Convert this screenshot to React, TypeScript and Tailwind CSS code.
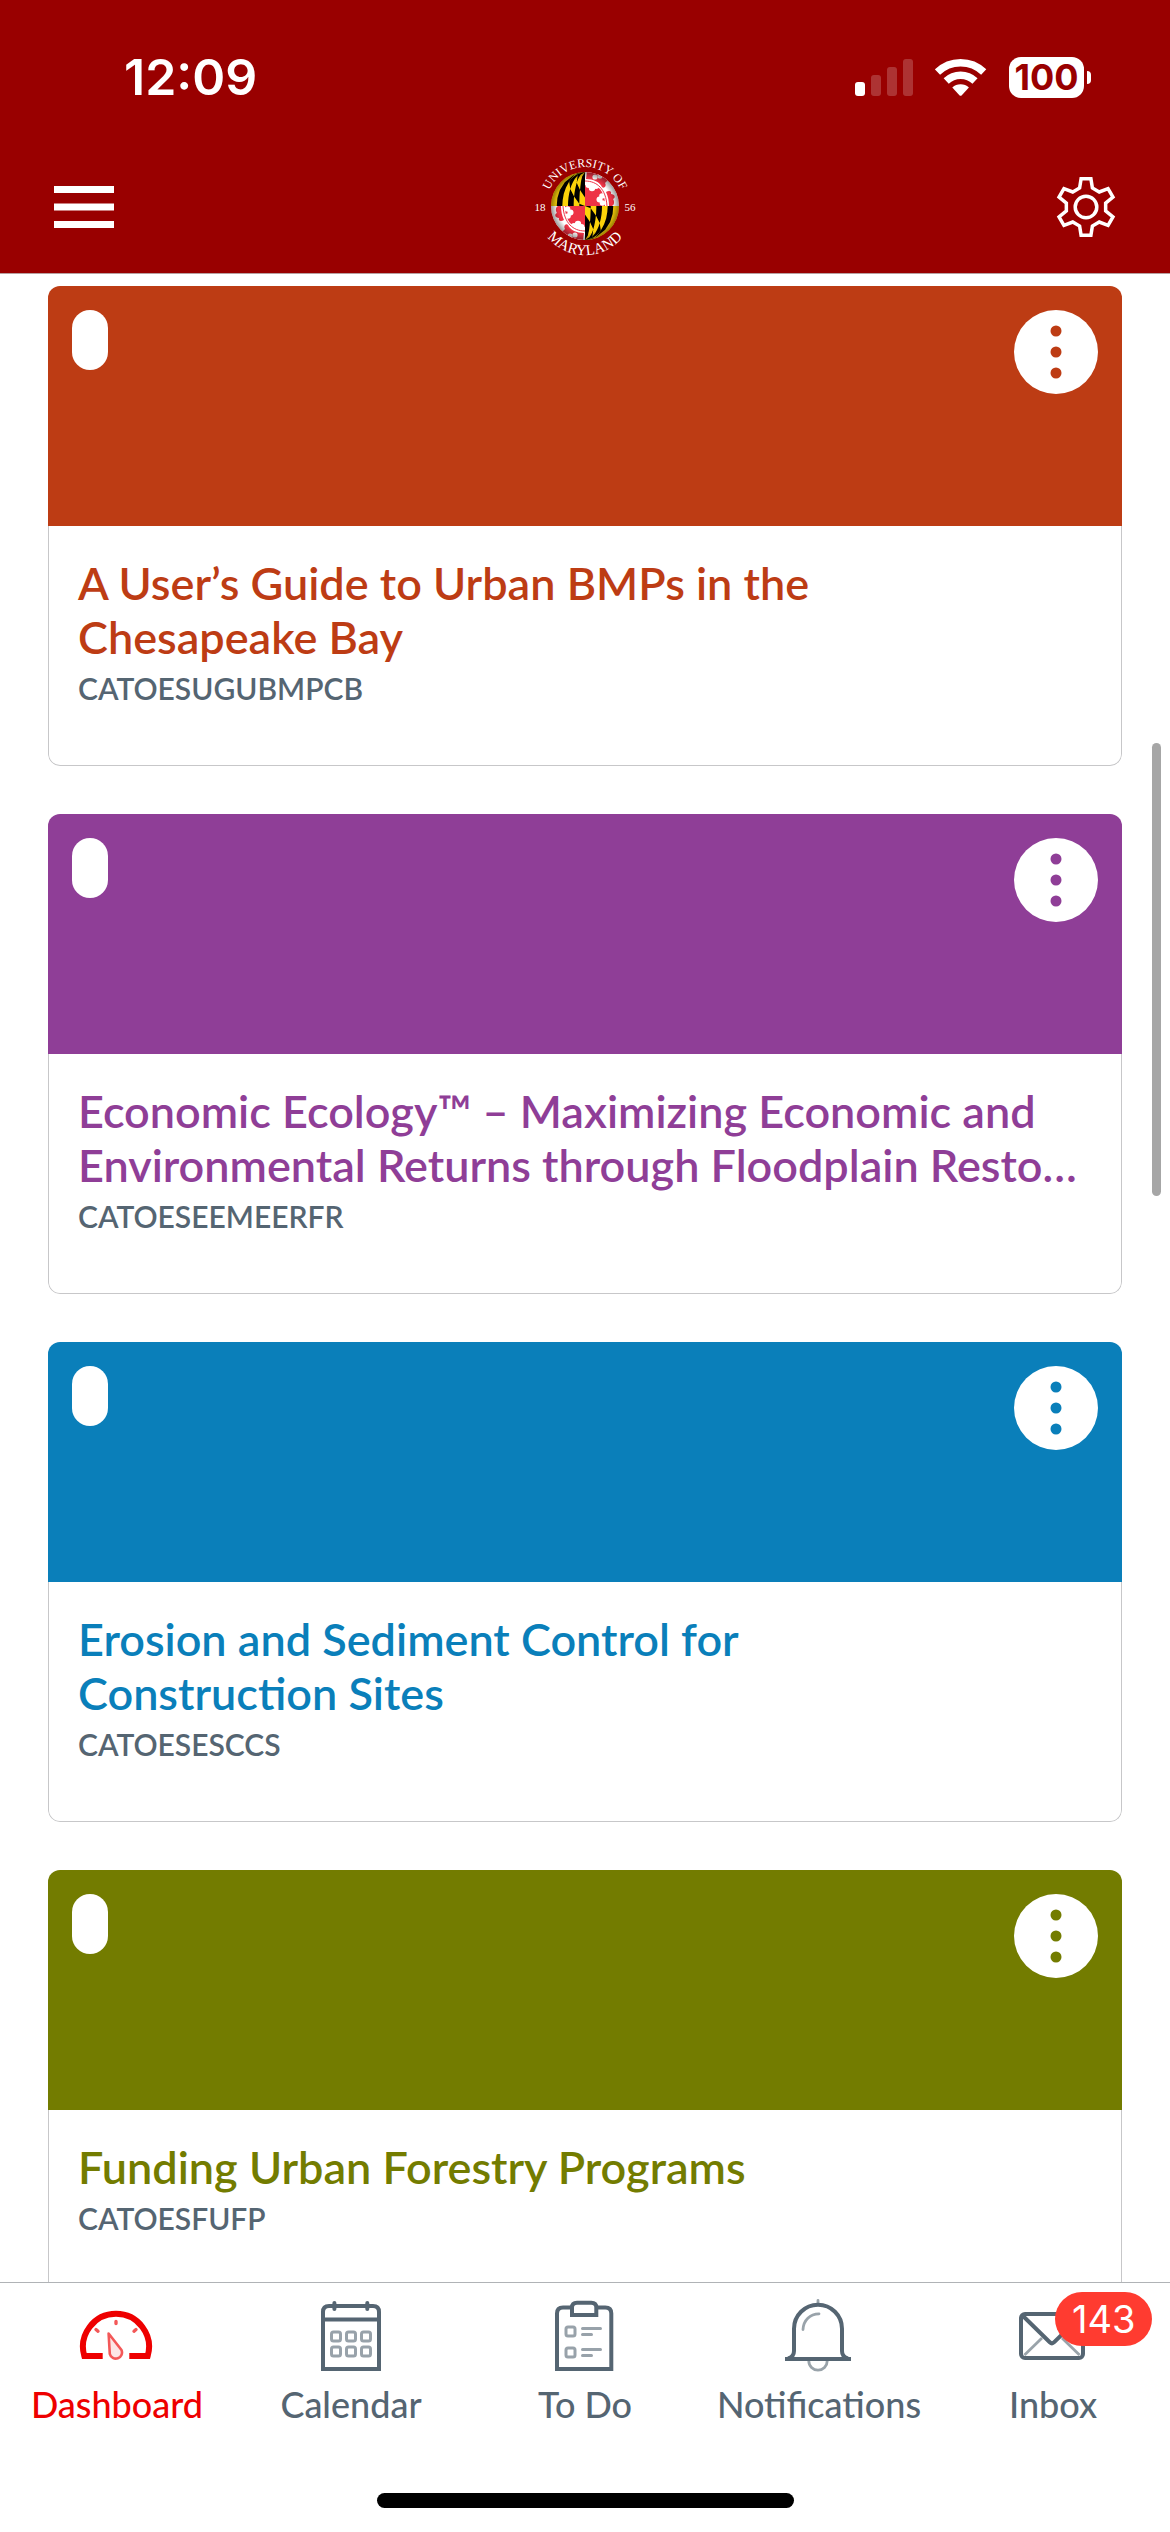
import React, { useState } from 'react';

type Course = {
  title: string;
  code: string;
  bg: string;
  text: string;
};

const courses: Course[] = [
  {
    title: 'A User’s Guide to Urban BMPs in the\nChesapeake Bay',
    code: 'CATOESUGUBMPCB',
    bg: 'bg-[#bd3c14]',
    text: 'text-[#bd3c14]',
  },
  {
    title: 'Economic Ecology™ – Maximizing Economic and\nEnvironmental Returns through Floodplain Resto…',
    code: 'CATOESEEMEERFR',
    bg: 'bg-[#8f3e97]',
    text: 'text-[#8f3e97]',
  },
  {
    title: 'Erosion and Sediment Control for\nConstruction Sites',
    code: 'CATOESESCCS',
    bg: 'bg-[#0a7fba]',
    text: 'text-[#0a7fba]',
  },
  {
    title: 'Funding Urban Forestry Programs',
    code: 'CATOESFUFP',
    bg: 'bg-[#737c00]',
    text: 'text-[#737c00]',
  },
];

// Point on the globe from flat quadrant coordinates (u to the left, v up)
const globePoint = (u: number, v: number) => {
  const y = -34 * v;
  const x = -34 * u * Math.sqrt(Math.max(0, 1 - v * v));
  return `${x.toFixed(1)},${y.toFixed(1)}`;
};

// Black parts of the black and gold quarter: six pales with a counterchanged bend
const blackPales = [0, 1, 2, 3, 4, 5].flatMap((i) => {
  const a = i / 6;
  const b = (i + 1) / 6;
  const low = (u: number) => Math.max(0, Math.min(1, u * 1.3 - 0.15));
  const high = (u: number) => Math.min(1, 0.25 + u * 1.3);
  const shape = (from: (u: number) => number, to: (u: number) => number) => {
    const left = [0, 0.25, 0.5, 0.75, 1].map((t) => globePoint(b, from(b) + (to(b) - from(b)) * t));
    const right = [1, 0.75, 0.5, 0.25, 0].map((t) => globePoint(a, from(a) + (to(a) - from(a)) * t));
    return [...left, ...right].join(' ');
  };
  return i % 2 === 1 ? [shape(low, high)] : [shape(() => 0, low), shape(high, () => 1)];
});

const gearPoints = [0, 1, 2, 3, 4, 5]
  .flatMap((i) => {
    const c = Math.cos((i * Math.PI) / 3);
    const s = Math.sin((i * Math.PI) / 3);
    return [[-6.4, -19], [-4.9, -28.3], [4.9, -28.3], [6.4, -19]].map(
      ([x, y]) => `${(30 + x * c - y * s).toFixed(2)},${(30 + x * s + y * c).toFixed(2)}`
    );
  })
  .join(' ');

const GearIcon = () => (
  <svg viewBox="0 0 60 60" className="size-[60px]" fill="none" stroke="currentColor" strokeWidth="3.5" aria-hidden="true">
    <polygon points={gearPoints} />
    <circle cx="30" cy="30" r="10.8" />
  </svg>
);

const MenuIcon = () => (
  <svg viewBox="0 0 60 60" className="size-[60px]" fill="currentColor" aria-hidden="true">
    <path d="M0 9h60v7H0zM0 26.5h60v7H0zM0 44h60v7H0z" />
  </svg>
);

const RedQuarter = () => (
  <g>
    <path d="M0 0H34V-34H0z" fill="#fff" />
    <path d="M0 0V-21C6-21 12-20 15-17C19-12 20-6 20 0z" fill="#ee3346" />
    <path d="M2-34C12-34 18-31 23-26L20-23C22-20 19-17 17-19C15-24 8-27 1-27z" fill="#ee3346" />
    <path d="M24 0C24-5 23-10 21-14C24-16 27-15 26-12C30-12 31-8 28-7C30-4 29-1 27 0z" fill="#ee3346" />
    <g fill="#fff">
      <circle cx="3.5" cy="-21" r="3" />
      <circle cx="7" cy="-18" r="3.2" />
      <circle cx="11" cy="-20" r="3" />
      <circle cx="17" cy="-10" r="2.8" />
      <circle cx="14.5" cy="-6.5" r="3" />
      <circle cx="17.5" cy="-3" r="2.8" />
      <circle cx="10" cy="-29" r="2.6" />
      <circle cx="15" cy="-30" r="2.6" />
    </g>
    <path d="M0-25C12-25 21-17 22 0" fill="none" stroke="#ee3346" strokeWidth="1" />
  </g>
);

const GoldQuarter = () => (
  <g>
    <path d="M0 0H-34V-34H0z" fill="#fbd20a" />
    {blackPales.map((points, i) => (
      <polygon key={i} points={points} fill="#000" />
    ))}
  </g>
);

const UniversityLogo = () => (
  <svg viewBox="-55 -52 110 104" className="h-[104px] w-[110px]" role="img" aria-label="University of Maryland 1856">
    <defs>
      <clipPath id="globe">
        <circle r="34" />
      </clipPath>
      <radialGradient id="shade">
        <stop offset="0.8" stopColor="#000" stopOpacity="0" />
        <stop offset="1" stopColor="#000" stopOpacity="0.4" />
      </radialGradient>
      <path id="arc-top" d="M-39 0A39 39 0 0 1 39 0" />
      <path id="arc-bottom" d="M-49 0A49 49 0 0 0 49 0" />
    </defs>
    <g clipPath="url(#globe)">
      <GoldQuarter />
      <g transform="rotate(180)">
        <GoldQuarter />
      </g>
      <RedQuarter />
      <g transform="rotate(180)">
        <RedQuarter />
      </g>
      <circle r="34" fill="url(#shade)" />
    </g>
    <g fill="#fff" fontFamily="'Liberation Serif', serif" textAnchor="middle">
      <text fontSize="12">
        <textPath href="#arc-top" startOffset="50%">UNIVERSITY OF</textPath>
      </text>
      <text fontSize="15">
        <textPath href="#arc-bottom" startOffset="50%">MARYLAND</textPath>
      </text>
      <text x="-45" y="5" fontSize="11">18</text>
      <text x="45" y="5" fontSize="11">56</text>
    </g>
  </svg>
);

const StatusBar = () => (
  <div className="flex h-[154px] items-center justify-between pr-[79px] pl-[124px] font-['Inter',sans-serif]">
    <span className="text-[50px] leading-[60px] font-semibold">12:09</span>
    <div className="flex items-center gap-[22px]">
      <svg viewBox="0 0 58 38" className="h-[38px] w-[58px]" fill="#fff" aria-hidden="true">
        <rect x="0" y="24" width="10" height="14" rx="3" />
        <g opacity="0.2">
          <rect x="16" y="17" width="10" height="21" rx="3" />
          <rect x="32" y="9" width="10" height="29" rx="3" />
          <rect x="48" y="1" width="10" height="37" rx="3" />
        </g>
      </svg>
      <svg viewBox="0 0 52 38" className="h-[38px] w-[52px]" fill="none" stroke="#fff" strokeWidth="7.4" aria-hidden="true">
        <path d="M2.5 14A33.3 33.3 0 0 1 48.7 14" />
        <path d="M11.2 23A20.8 20.8 0 0 1 40 23" />
        <path d="M17.3 29.6A12 12 0 0 1 33.9 29.6L26.8 37.2Q25.6 38.4 24.4 37.2z" fill="#fff" stroke="none" />
      </svg>
      <div className="flex items-center gap-[3px]">
        <span className="flex h-[41px] w-[75px] items-center justify-center rounded-[12px] bg-white text-[36px] leading-[41px] font-bold text-[#990000]">
          100
        </span>
        <span className="h-[13px] w-1 rounded-r-full bg-white" />
      </div>
    </div>
  </div>
);

const Header = () => (
  <header className="shrink-0 border-b border-[#b8a0a0] bg-[#990000] text-white">
    <StatusBar />
    <div className="flex h-[119px] items-start justify-between px-[54px]">
      <button type="button" aria-label="Menu" className="mt-[23px]">
        <MenuIcon />
      </button>
      <UniversityLogo />
      <button type="button" aria-label="Settings" className="mt-[23px]">
        <GearIcon />
      </button>
    </div>
  </header>
);

const CourseCard = ({ course }: { course: Course }) => (
  <article className="flex h-[480px] shrink-0 flex-col overflow-hidden rounded-[12px]">
    <div className={`flex h-[240px] shrink-0 items-start justify-between p-6 ${course.bg}`}>
      <span className="h-[60px] w-9 rounded-full bg-white" />
      <button
        type="button"
        aria-label={`Options for ${course.title}`}
        className={`flex size-[84px] items-center justify-center rounded-full bg-white ${course.text}`}
      >
        <svg viewBox="0 0 54 54" className="size-[54px]" fill="currentColor" aria-hidden="true">
          <circle cx="27" cy="6" r="5.5" />
          <circle cx="27" cy="27" r="5.5" />
          <circle cx="27" cy="48" r="5.5" />
        </svg>
      </button>
    </div>
    <div className="flex-1 rounded-b-[12px] border border-t-0 border-[#c7c7c9] pt-[30px] pr-6 pl-[29px]">
      <h2 className={`text-[45px] leading-[54px] font-semibold whitespace-pre-line ${course.text}`}>{course.title}</h2>
      <p className="mt-[6px] text-[30px] leading-[36px] font-semibold text-[#556572]">{course.code}</p>
    </div>
  </article>
);

const DashboardIcon = () => (
  <svg viewBox="0 0 78 78" className="size-[78px]" fill="none" stroke="currentColor" aria-hidden="true">
    <path d="M24.7 58H6.3A33 33 0 1 1 69.7 58H51.3" strokeWidth="6" />
    <g strokeLinecap="round" opacity="0.65">
      <path d="M38 23.5V25.5M18 31.5L20 33.2M58 31.5L56 33.2" strokeWidth="3.4" />
      <path d="M30.6 35.5L43.5 52A6.2 6.2 0 1 1 31.8 56z" strokeWidth="2.6" strokeLinejoin="round" fill="currentColor" fillOpacity="0.15" />
    </g>
  </svg>
);

const CalendarIcon = () => (
  <svg viewBox="0 0 78 78" className="size-[78px]" fill="none" stroke="currentColor" strokeWidth="4" aria-hidden="true">
    <path d="M11 71V14Q11 8 17 8H61Q67 8 67 14V71zM11 21.5H67" />
    <path d="M22.4 5V11M55.3 5V11" strokeLinecap="round" />
    <g strokeWidth="3" opacity="0.6">
      <rect x="19.5" y="34" width="9" height="9" rx="2" />
      <rect x="34.5" y="34" width="9" height="9" rx="2" />
      <rect x="49.5" y="34" width="9" height="9" rx="2" />
      <rect x="19.5" y="49" width="9" height="9" rx="2" />
      <rect x="34.5" y="49" width="9" height="9" rx="2" />
      <rect x="49.5" y="49" width="9" height="9" rx="2" />
    </g>
  </svg>
);

const TodoIcon = () => (
  <svg viewBox="0 0 78 78" className="size-[78px]" fill="none" stroke="currentColor" strokeWidth="4" aria-hidden="true">
    <path d="M26 9.5H17Q11 9.5 11 15.5V71H65.3V15.5Q65.3 9.5 59.3 9.5H50.3" />
    <path d="M26 17V9.5Q26 4.7 31 4.7H45.3Q50.3 4.7 50.3 9.5V17z" />
    <g strokeWidth="3" opacity="0.6">
      <rect x="20" y="29" width="9" height="9" rx="2" />
      <rect x="20" y="50" width="9" height="9" rx="2" />
      <path d="M36.5 30.4H54.5M36.5 36.4H45.5M36.5 51.4H54.5M36.5 57.4H45.5" strokeLinecap="round" />
    </g>
  </svg>
);

const BellIcon = () => (
  <svg viewBox="0 0 78 78" className="size-[78px]" fill="none" stroke="currentColor" strokeWidth="4" aria-hidden="true">
    <g strokeWidth="2.8" strokeLinecap="round" opacity="0.6">
      <path d="M38 2.5V5M39 15.8C30 16 23.5 22 23 31.5M28.8 63A9.2 9.2 0 1 0 47.2 63" />
    </g>
    <path d="M5 61H71" />
    <path d="M8 60.5Q14 59 14 53V30.7A24 24 0 0 1 62 30.7V53Q62 59 68 60.5" />
  </svg>
);

const InboxIcon = () => (
  <svg viewBox="0 0 78 78" className="size-[78px]" fill="none" stroke="currentColor" strokeWidth="4" aria-hidden="true">
    <path d="M10.5 57L28 40M65.5 57L48 40" strokeWidth="2.8" opacity="0.6" />
    <rect x="7" y="16" width="62" height="44" rx="4" />
    <path d="M8.5 17.5L35.8 44.2Q38 46.4 40.2 44.2L67.5 17.5" />
  </svg>
);

const tabs = [
  { name: 'Dashboard', Icon: DashboardIcon },
  { name: 'Calendar', Icon: CalendarIcon },
  { name: 'To Do', Icon: TodoIcon },
  { name: 'Notifications', Icon: BellIcon },
  { name: 'Inbox', Icon: InboxIcon, badge: 143 },
];

const TabBar = () => {
  const [active, setActive] = useState('Dashboard');

  return (
    <footer className="flex shrink-0 flex-col items-center border-t border-[#b0b3b6] bg-white pb-6">
      <nav className="grid w-full grid-cols-5">
        {tabs.map(({ name, Icon, badge }) => (
          <button
            key={name}
            type="button"
            onClick={() => setActive(name)}
            className={`flex flex-col items-center gap-[7px] pt-[15px] text-[36px] leading-[43px] font-medium ${
              active === name ? 'text-[#ee0000]' : 'text-[#556572]'
            }`}
          >
            <span className="relative">
              <Icon />
              {badge && (
                <span className="absolute -top-[6px] left-[41px] rounded-full bg-[#ff3b30] px-[17px] font-['Inter',sans-serif] text-[38px] leading-[54px] font-normal text-white">
                  {badge}
                </span>
              )}
            </span>
            {name}
          </button>
        ))}
      </nav>
      <div className="mt-[67px] h-[15px] w-[417px] rounded-full bg-black" />
    </footer>
  );
};

const App = () => {
  return (
    <div className="flex h-screen flex-col bg-white font-['Lato',sans-serif]">
      <Header />
      <main className="relative min-h-0 flex-1 overflow-hidden">
        <div className="flex flex-col gap-12 px-12 pt-3">
          {courses.map((course) => (
            <CourseCard key={course.code} course={course} />
          ))}
        </div>
        {/* Scroll indicator */}
        <div className="absolute top-[469px] right-[9px] h-[453px] w-[9px] rounded-full bg-[#a6a6a6]" />
      </main>
      <TabBar />
    </div>
  );
};

export default App;
